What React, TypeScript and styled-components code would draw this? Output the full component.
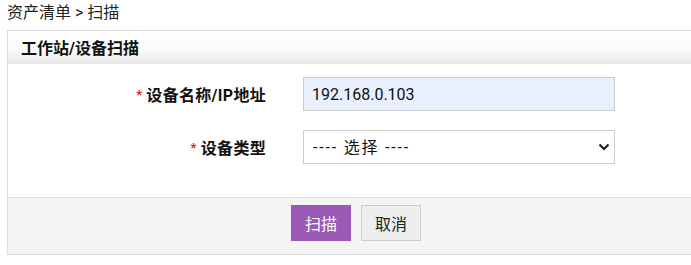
import React from 'react';
import styled, { createGlobalStyle } from 'styled-components';

const GlobalStyle = createGlobalStyle`
  html, body {
    margin: 0;
    padding: 0;
    overflow: hidden;
    background: #fff;
  }
  body {
    font-family: Roboto, "Noto Sans CJK SC", sans-serif;
    color: #222;
  }
`;

const Page = styled.div`
  padding: 0 0 0 7px;
  width: 698px;
`;

const Breadcrumb = styled.div`
  height: 30px;
  font-size: 16px;
  line-height: 26px;
  color: #222;
`;

const Panel = styled.div`
  border: 1px solid #dedede;
  background: #fff;
`;

const PanelHeader = styled.div`
  height: 32px;
  padding-left: 13px;
  display: flex;
  align-items: center;
  background: linear-gradient(to bottom, #ffffff 0%, #fbfbfb 55%, #e9e9e9 100%);
  border-bottom: 1px solid #e4e4e4;
  font-size: 16px;
  font-weight: bold;
  color: #111;
`;

const PanelBody = styled.div`
  padding: 13px 0 33px;
  display: grid;
  grid-template-columns: 258px 312px;
  column-gap: 37px;
  row-gap: 19px;
  align-items: center;
`;

const Label = styled.label`
  text-align: right;
  font-size: 16px;
  font-weight: bold;
  letter-spacing: 0.3px;
  color: #111;
`;

const Required = styled.span`
  color: #e02020;
  font-size: 13px;
  margin-right: 4px;
  vertical-align: 2px;
`;

const TextInput = styled.input`
  box-sizing: border-box;
  width: 312px;
  height: 34px;
  padding: 0 8px;
  border: 1px solid #cccccc;
  background: #e8f0fe;
  font-family: Roboto, "Noto Sans CJK SC", sans-serif;
  font-size: 16px;
  color: #111;
  outline: none;
`;

const SelectWrap = styled.div`
  position: relative;
  width: 312px;
  height: 34px;
`;

const Select = styled.select`
  box-sizing: border-box;
  width: 100%;
  height: 100%;
  padding: 0 24px 0 9px;
  border: 1px solid #cccccc;
  border-radius: 0;
  background: #fff;
  appearance: none;
  -webkit-appearance: none;
  font-family: Roboto, "Noto Sans CJK SC", sans-serif;
  font-size: 16px;
  letter-spacing: 1.8px;
  color: #111;
  outline: none;
`;

const Chevron = styled.svg`
  position: absolute;
  right: 5px;
  top: 13px;
  width: 12px;
  height: 8px;
  pointer-events: none;
`;

const PanelFooter = styled.div`
  border-top: 1px solid #dedede;
  background: #f4f4f4;
  padding: 7px 0 13px;
  display: flex;
  justify-content: center;
  gap: 10px;
`;

const Button = styled.button<{ $primary?: boolean }>`
  box-sizing: border-box;
  width: 60px;
  height: 36px;
  border: 1px solid ${(p) => (p.$primary ? '#9b59b6' : '#cccccc')};
  background: ${(p) => (p.$primary ? '#9b59b6' : '#eeeeee')};
  color: ${(p) => (p.$primary ? '#fff' : '#222')};
  font-family: Roboto, "Noto Sans CJK SC", sans-serif;
  font-size: 16px;
  border-radius: 0;
  padding: 0;
  cursor: pointer;
`;

const App: React.FC = () => {
  return (
    <>
      <GlobalStyle />
      <Page>
        <Breadcrumb>资产清单 &gt; 扫描</Breadcrumb>
        <Panel>
          <PanelHeader>工作站/设备扫描</PanelHeader>
          <PanelBody>
            <Label>
              <Required>*</Required>设备名称/IP地址
            </Label>
            <TextInput defaultValue="192.168.0.103" />
            <Label>
              <Required>*</Required>设备类型
            </Label>
            <SelectWrap>
              <Select defaultValue="">
                <option value="">---- 选择 ----</option>
              </Select>
              <Chevron viewBox="0 0 12 8">
                <path d="M1.5 1.5 L6 6 L10.5 1.5" fill="none" stroke="#222" strokeWidth="2.2" />
              </Chevron>
            </SelectWrap>
          </PanelBody>
          <PanelFooter>
            <Button $primary>扫描</Button>
            <Button>取消</Button>
          </PanelFooter>
        </Panel>
      </Page>
    </>
  );
};

export default App;
